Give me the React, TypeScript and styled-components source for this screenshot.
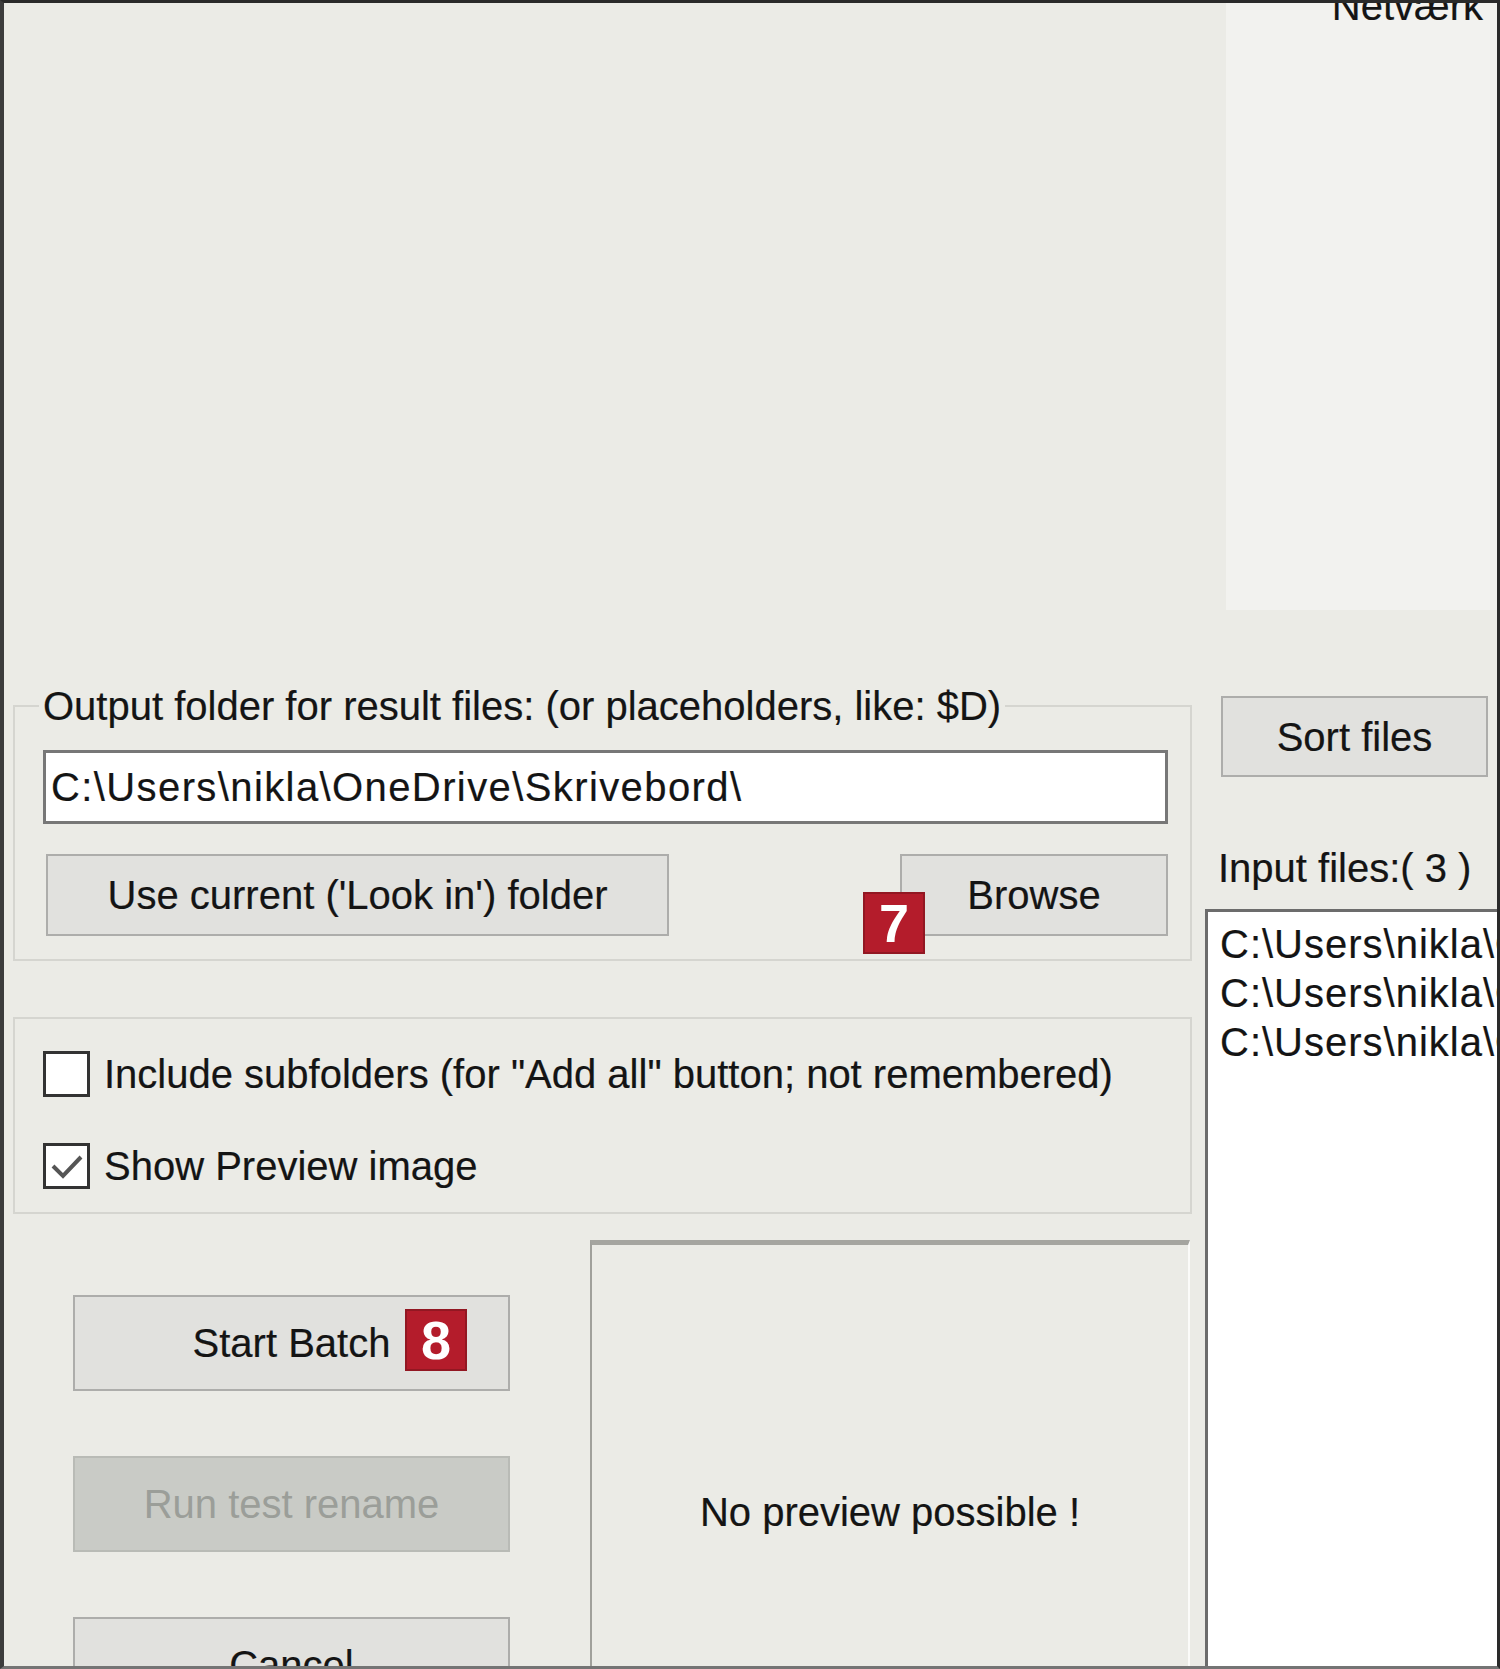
import React from 'react';
import styled, { createGlobalStyle } from 'styled-components';

const inputFiles = [
  'C:\\Users\\nikla\\OneDrive\\Skrivebord\\',
  'C:\\Users\\nikla\\OneDrive\\Skrivebord\\',
  'C:\\Users\\nikla\\OneDrive\\Skrivebord\\',
];

const GlobalStyle = createGlobalStyle`
  html, body {
    margin: 0;
    padding: 0;
    background: #ebebe6;
  }
  body {
    font-family: "Liberation Sans", Arial, sans-serif;
    color: #141414;
  }
  * {
    box-sizing: border-box;
  }
`;

const Window = styled.div`
  width: 1500px;
  height: 1669px;
  overflow: hidden;
  display: flex;
  background: #ebebe6;
  border-top: 3px solid #2a2a2a;
  border-left: 4px solid #3c3c3c;
  border-right: 3px solid #2a2a2a;
  border-bottom: 3px solid #747474;
  font-size: 40px;
  line-height: 46px;
  -webkit-text-stroke: 0.2px #141414;
`;

const LeftPane = styled.div`
  width: 1201px;
  flex-shrink: 0;
  padding: 702px 0 0 9px;
  display: flex;
  flex-direction: column;
`;

const RightPane = styled.div`
  flex: 1;
  min-width: 0;
  display: flex;
  flex-direction: column;
`;

const GroupBox = styled.div<{ $top?: number; $gap?: number }>`
  width: 1179px;
  margin-top: ${(p) => p.$top ?? 0}px;
  border: 2px solid #d5d5d0;
  padding: ${(p) => p.$gap ?? 0}px 22px 23px 28px;
  display: flex;
  flex-direction: column;
`;

const Legend = styled.div`
  align-self: flex-start;
  margin: -24px 0 0 -4px;
  padding: 0 4px;
  background: #ebebe6;
  white-space: nowrap;
`;

const TextBox = styled.div`
  margin-top: 21px;
  height: 74px;
  border: 3px solid #777;
  background: #fff;
  padding-left: 5px;
  display: flex;
  align-items: center;
  white-space: nowrap;
  overflow: hidden;
  letter-spacing: 1.4px;
`;

const ButtonRow = styled.div`
  margin: 30px 0 0 3px;
  display: flex;
  justify-content: space-between;
`;

const Button = styled.button<{ $w: number; $h: number }>`
  position: relative;
  width: ${(p) => p.$w}px;
  height: ${(p) => p.$h}px;
  flex-shrink: 0;
  padding: 0;
  font: inherit;
  color: #141414;
  background: #e1e1de;
  border: 2px solid #adadab;
  white-space: nowrap;
  text-align: center;

  &:disabled {
    background: #c9cbc6;
    border-color: #b9bbb6;
    color: #9b9e99;
    -webkit-text-stroke: 0;
  }
`;

const Badge = styled.span<{ $left: number; $top: number }>`
  position: absolute;
  left: ${(p) => p.$left}px;
  top: ${(p) => p.$top}px;
  width: 62px;
  height: 62px;
  background: #b41c2b;
  border: 2px solid #921722;
  color: #fff;
  -webkit-text-stroke: 0;
  font-weight: 700;
  font-size: 54px;
  line-height: 58px;
  text-align: center;
`;

const CheckRow = styled.label<{ $top?: number }>`
  display: flex;
  align-items: center;
  gap: 14px;
  height: 46px;
  margin-top: ${(p) => p.$top ?? 0}px;
  white-space: nowrap;
`;

const CheckBox = styled.span`
  width: 47px;
  height: 46px;
  flex-shrink: 0;
  border: 3px solid #333;
  background: #fff;
  display: flex;
  align-items: center;
  justify-content: center;
`;

const BottomRow = styled.div`
  margin-top: 26px;
  display: flex;
  align-items: flex-start;
`;

const ActionColumn = styled.div`
  margin-left: 60px;
  padding-top: 55px;
  display: flex;
  flex-direction: column;
  gap: 65px;
`;

const Preview = styled.div`
  width: 600px;
  height: 560px;
  margin-left: 80px;
  border-top: 5px solid #a5a5a0;
  border-left: 2px solid #a0a09b;
  border-right: 2px solid #fbfbf9;
  padding-top: 244px;
  text-align: center;
`;

const NetworkPanel = styled.div`
  margin-left: 21px;
  height: 607px;
  background: #f2f2ef;
  overflow: hidden;
  text-align: right;
  padding-right: 14px;
`;

const NetworkLabel = styled.div`
  margin-top: -20px;
`;

const FilesLabel = styled.div`
  margin: 68px 0 0 13px;
  white-space: nowrap;
`;

const ListBox = styled.div`
  flex: 1;
  margin-top: 18px;
  background: #fff;
  border-left: 3px solid #6c6c6c;
  border-top: 3px solid #6c6c6c;
  padding: 8px 0 0 12px;
  overflow: hidden;
`;

const ListItem = styled.div`
  line-height: 49px;
  white-space: nowrap;
  letter-spacing: 1px;
`;

const Check = () => (
  <svg width="36" height="30" viewBox="0 0 36 30">
    <polyline points="4,15 14,25 32,6" fill="none" stroke="#555" strokeWidth="4" />
  </svg>
);

const App = () => {
  return (
    <>
      <GlobalStyle />
      <Window>
        <LeftPane>
          <GroupBox>
            <Legend>Output folder for result files: (or placeholders, like: $D)</Legend>
            <TextBox>C:\Users\nikla\OneDrive\Skrivebord\</TextBox>
            <ButtonRow>
              <Button $w={623} $h={82}>Use current ('Look in') folder</Button>
              <Button $w={268} $h={82}>
                Browse
                <Badge $left={-39} $top={36}>7</Badge>
              </Button>
            </ButtonRow>
          </GroupBox>

          <GroupBox $top={56} $gap={32}>
            <CheckRow>
              <CheckBox />
              Include subfolders (for "Add all" button; not remembered)
            </CheckRow>
            <CheckRow $top={46}>
              <CheckBox>
                <Check />
              </CheckBox>
              Show Preview image
            </CheckRow>
          </GroupBox>

          <BottomRow>
            <ActionColumn>
              <Button $w={437} $h={96}>
                Start Batch
                <Badge $left={330} $top={12}>8</Badge>
              </Button>
              <Button $w={437} $h={96} disabled>
                Run test rename
              </Button>
              <Button $w={437} $h={96}>Cancel</Button>
            </ActionColumn>
            <Preview>No preview possible !</Preview>
          </BottomRow>
        </LeftPane>

        <RightPane>
          <NetworkPanel>
            <NetworkLabel>Netværk</NetworkLabel>
          </NetworkPanel>
          <Button $w={267} $h={81} style={{ marginTop: 86, marginLeft: 16 }}>
            Sort files
          </Button>
          <FilesLabel>Input files:( 3 )</FilesLabel>
          <ListBox>
            {inputFiles.map((f, i) => (
              <ListItem key={i}>{f}</ListItem>
            ))}
          </ListBox>
        </RightPane>
      </Window>
    </>
  );
};

export default App;
